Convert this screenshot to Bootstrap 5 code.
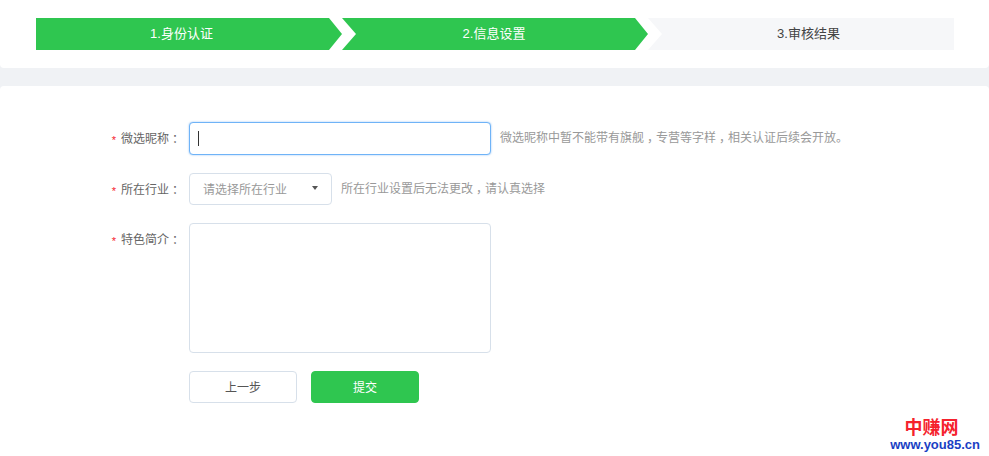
<!DOCTYPE html>
<html lang="zh">
<head>
<meta charset="utf-8">
<title>信息设置</title>
<link href="https://cdn.jsdelivr.net/npm/bootstrap@5.3.0/dist/css/bootstrap.min.css" rel="stylesheet">
<style>
html,body{height:456px;overflow:hidden}
body{background:#f0f2f5;font-family:"Liberation Sans","Noto Sans CJK SC",sans-serif;font-size:12px;color:#666;position:relative}
.top-panel{height:68px;background:#fff;border-radius:0 0 4px 4px;padding:18px 35px 0 36px;margin-bottom:18px}
.step-item{flex:0 0 306px;height:32px;line-height:32px;font-size:13px;text-align:center;background:#2fc650;color:#fff;padding-right:2px;
 clip-path:polygon(0 0,calc(100% - 13px) 0,100% 50%,calc(100% - 13px) 100%,0 100%,14px 50%)}
.step-first{padding-right:15px;clip-path:polygon(0 0,calc(100% - 13px) 0,100% 50%,calc(100% - 13px) 100%,0 100%)}
.step-last{padding-right:0;padding-left:15px;background:#f6f7f9;color:#444;clip-path:polygon(0 0,100% 0,100% 100%,0 100%,14px 50%)}
.form-panel{height:370px;background:#fff;border-radius:4px 4px 0 0;padding-top:36px}
.form-line{margin-bottom:18px}
.form-name{flex:0 0 189px;height:32px;padding:1px 8px 0 0;display:flex;justify-content:flex-end;line-height:32px;color:#666;margin:0}
.req{color:#f5222d;margin-right:5px;font-size:11px;line-height:30px;padding-top:2px}
.full-punct{font-feature-settings:"halt";margin:0 3px}
.name-input{width:302px;height:33px;border:1px solid #6fb3f7;border-radius:4px;box-shadow:0 0 2px rgba(64,150,240,.6);outline:0;background:#fff;display:block;padding:0 8px}
.caret-bar{position:absolute;left:9px;top:9px;width:1px;height:15px;background:#333}
.hint-text{color:#999;line-height:32px;margin-left:9px}
.hint-tall{line-height:33px}
.trade-pick{width:143px;height:32px;border:1px solid #d7e0ea;border-radius:4px;padding:1px 14px 0 13px;line-height:30px;color:#999}
.trade-arrow{width:0;height:0;border-left:3px solid transparent;border-right:3px solid transparent;border-top:4px solid #555;margin:-3px -1px 0 0}
.intro-box{width:302px;height:130px;border:1px solid #d7e0ea;border-radius:4px;display:block;resize:none;outline:0}
.act-btn{width:108px;height:32px;padding:1px 0 0;font-size:12px;line-height:30px;border-radius:4px}
.act-back{background:#fff;border:1px solid #d7e0ea;color:#555}
.act-next{background:#2fc650;border:1px solid #2fc650;color:#fff;margin-left:14px}
.site-mark{position:absolute;right:9px;bottom:5px;text-align:center;font-weight:700;line-height:1}
.site-cn{color:#f5222d;font-size:18px;display:block;margin:0 7px 1px 0}
.site-url{color:#1a3fc4;font-size:13px;display:block}
</style>
</head>
<body>
<div class="top-panel d-flex">
  <div class="step-item step-first">1.身份认证</div>
  <div class="step-item">2.信息设置</div>
  <div class="step-item step-last">3.审核结果</div>
</div>
<form class="form-panel">
  <div class="form-line d-flex">
    <label class="form-name"><span class="req">*</span><span>微选昵称<span class="full-punct">：</span></span></label>
    <div class="position-relative"><input class="name-input" type="text" aria-label="微选昵称"><span class="caret-bar"></span></div>
    <div class="hint-text hint-tall">微选昵称中暂不能带有旗舰<span class="full-punct">，</span>专营等字样<span class="full-punct">，</span>相关认证后续会开放。</div>
  </div>
  <div class="form-line d-flex">
    <label class="form-name"><span class="req">*</span><span>所在行业<span class="full-punct">：</span></span></label>
    <div class="trade-pick d-flex align-items-center justify-content-between"><span>请选择所在行业</span><span class="trade-arrow"></span></div>
    <div class="hint-text">所在行业设置后无法更改<span class="full-punct">，</span>请认真选择</div>
  </div>
  <div class="form-line d-flex">
    <label class="form-name"><span class="req">*</span><span>特色简介<span class="full-punct">：</span></span></label>
    <textarea class="intro-box" aria-label="特色简介"></textarea>
  </div>
  <div class="d-flex">
    <div class="form-name"></div>
    <button type="button" class="btn act-btn act-back">上一步</button>
    <button type="button" class="btn act-btn act-next">提交</button>
  </div>
</form>
<div class="site-mark"><span class="site-cn">中赚网</span><span class="site-url">www.you85.cn</span></div>
<script src="https://cdn.jsdelivr.net/npm/bootstrap@5.3.0/dist/js/bootstrap.bundle.min.js"></script>
</body>
</html>
